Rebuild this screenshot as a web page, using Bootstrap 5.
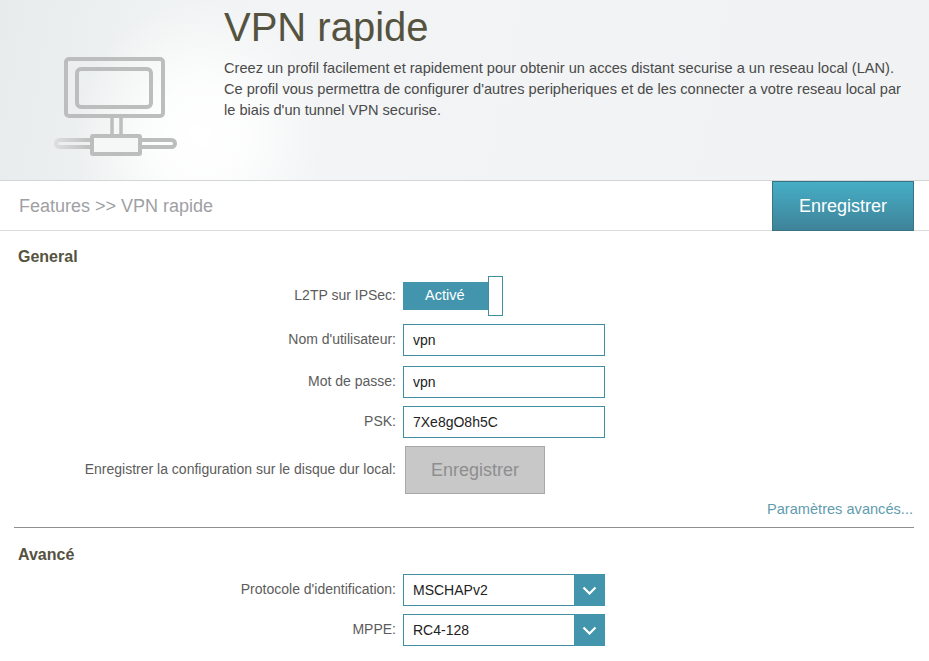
<!DOCTYPE html>
<html lang="fr">

<head>
    <meta charset="UTF-8">
    <title>VPN rapide</title>
    <link rel="stylesheet" href="https://cdn.jsdelivr.net/npm/bootstrap@5.3.0/dist/css/bootstrap.min.css">
    <style>
        html, body { height: 661px; overflow: hidden; }
        body { font-family: "Liberation Sans", Arial, sans-serif; color: #555; background: #fff; font-size: 14px; }
        .hero-band {
            height: 181px;
            border-bottom: 1px solid #d4d6d6;
            background:
                radial-gradient(ellipse 125px 135px at 200px 135px, #fff 0%, rgba(255,255,255,.85) 35%, rgba(255,255,255,0) 100%),
                linear-gradient(100deg, #e8ebec 0%, #f0f3f3 18%, #f2f4f5 30%, #f0f2f3 100%);
        }
        .hero-icon { width: 224px; flex: none; padding: 54px 0 0 50px; }
        .hero-art { filter: blur(.4px); }
        .hero-title { font-size: 40px; line-height: 44px; color: #55533f; padding-top: 5px; margin: 0 0 9px; font-weight: 400; }
        .hero-text { font-size: 14.6px; line-height: 21px; color: #4a4a4a; margin: 0; width: 688px; }
        .crumb-bar { height: 50px; border-bottom: 1px solid #dcdddd; padding-left: 19px; }
        .crumb-text { font-size: 18px; color: #a0a0a4; padding-top: 2px; }
        .save-top {
            width: 142px; height: 50px; margin-right: 15px;
            border: 1px solid #3a7385; border-radius: 0;
            background: linear-gradient(#45aec5, #3f8399);
            color: #fff; font-size: 18px; padding: 0;
        }
        .save-top:hover { color: #fff; }
        .sect-title { font-size: 16px; font-weight: 700; color: #55533f; line-height: 20px; margin: 0; padding-left: 18px; }
        .mt-general { margin-top: 16px; }
        .mt-advanced { margin-top: 17px; }
        .field-row { display: flex; align-items: center; }
        .gap-8 { margin-top: 8px; }
        .gap-9 { margin-top: 9px; }
        .gap-10 { margin-top: 10px; }
        .gap-link { margin-top: 5px; }
        .field-label { width: 396px; text-align: right; flex: none; color: #5c5c5c; font-size: 14px; margin: 0; padding-bottom: 1px; }
        .field-body { margin-left: 7px; }
        .dl-input {
            width: 202px; height: 32px; border: 1px solid #418ea0; border-radius: 0;
            padding: 0 9px; font-size: 14px; color: #222; background: #fff;
        }
        .dl-input:focus { outline: none; box-shadow: none; border-color: #418ea0; }
        .switch-wrap { width: 100px; height: 40px; position: relative; display: flex; align-items: center; }
        .switch-on {
            width: 86px; height: 28px; background: #4295ad; color: #fff;
            line-height: 27px; font-size: 14.5px; padding-left: 22px;
        }
        .switch-knob {
            position: absolute; left: 85px; top: 0; width: 15px; height: 40px;
            background: #fff; border: 1px solid #418ea0;
        }
        .save-off {
            width: 140px; height: 48px; margin-left: 2px; border: 1px solid #a8a8a8; border-radius: 0;
            background: #c8c8c8; color: #8e8e90; font-size: 18px; padding: 0;
        }
        .more-link { color: #5f9cae; text-decoration: none; font-size: 14.6px; line-height: 20px; padding-right: 16px; }
        .sect-rule { margin: 7px 15px 0 14px; border: 0; border-top: 1px solid #8f8f8f; opacity: 1; }
        .dl-select { position: relative; width: 202px; height: 32px; }
        .dl-select select {
            appearance: none; width: 100%; height: 100%; border: 1px solid #418ea0; border-radius: 0;
            background: #fff; font-size: 14px; color: #222; padding: 0 9px;
        }
        .dl-caret {
            position: absolute; right: 0; top: 0; width: 31px; height: 32px; background: #4295ad;
            display: flex; align-items: center; justify-content: center; pointer-events: none;
        }
    </style>
</head>

<body>
    <!-- Bandeau titre -->
    <header class="hero-band d-flex">
        <div class="hero-icon">
            <svg class="hero-art" width="130" height="104" viewBox="0 0 130 104" fill="none">
                <defs>
                    <linearGradient id="tube-fade" x1="0" x2="1" y1="0" y2="0">
                        <stop offset="0" stop-color="#dcdede"/>
                        <stop offset="1" stop-color="#bcbdbd"/>
                    </linearGradient>
                </defs>
                <g stroke="#bcbdbd" stroke-width="4">
                    <rect x="16" y="5" width="97" height="57" rx="3"/>
                    <rect x="27" y="15" width="74" height="38" rx="4"/>
                    <path d="M62 64v18M71 64v18" stroke-width="3.5"/>
                    <path d="M42 86H9.5a3.5 3.5 0 0 0 0 7H42" stroke="url(#tube-fade)"/>
                    <path d="M90 86h31.500a3.500 3.500 0 0 1 0 7H90"/>
                    <rect x="42" y="82" width="48" height="18" rx="1" fill="#f6f8f8"/>
                </g>
            </svg>
        </div>
        <div>
            <h1 class="hero-title">VPN rapide</h1>
            <p class="hero-text">Creez un profil facilement et rapidement pour obtenir un acces distant securise a un reseau local (LAN). Ce profil vous permettra de configurer d'autres peripheriques et de les connecter a votre reseau local par le biais d'un tunnel VPN securise.</p>
        </div>
    </header>

    <!-- Fil d'ariane -->
    <div class="crumb-bar d-flex justify-content-between align-items-center">
        <span class="crumb-text">Features &gt;&gt; VPN rapide</span>
        <button type="button" class="btn save-top align-self-start">Enregistrer</button>
    </div>

    <!-- General -->
    <section>
        <h2 class="sect-title mt-general">General</h2>
        <div class="field-row gap-9">
            <label class="field-label">L2TP sur IPSec:</label>
            <div class="field-body switch-wrap">
                <div class="switch-on">Activé</div>
                <div class="switch-knob"></div>
            </div>
        </div>
        <div class="field-row gap-8">
            <label class="field-label" for="f-user">Nom d'utilisateur:</label>
            <div class="field-body"><input id="f-user" type="text" class="dl-input d-block" value="vpn"></div>
        </div>
        <div class="field-row gap-10">
            <label class="field-label" for="f-pass">Mot de passe:</label>
            <div class="field-body"><input id="f-pass" type="text" class="dl-input d-block" value="vpn"></div>
        </div>
        <div class="field-row gap-8">
            <label class="field-label" for="f-psk">PSK:</label>
            <div class="field-body"><input id="f-psk" type="text" class="dl-input d-block" value="7Xe8gO8h5C"></div>
        </div>
        <div class="field-row gap-8">
            <label class="field-label">Enregistrer la configuration sur le disque dur local:</label>
            <div class="field-body"><button type="button" class="btn save-off d-block">Enregistrer</button></div>
        </div>
        <div class="text-end gap-link"><a href="#" class="more-link">Paramètres avancés...</a></div>
        <hr class="sect-rule">
    </section>

    <!-- Avance -->
    <section>
        <h2 class="sect-title mt-advanced">Avancé</h2>
        <div class="field-row gap-9">
            <label class="field-label" for="f-auth">Protocole d'identification:</label>
            <div class="field-body dl-select">
                <select id="f-auth"><option>MSCHAPv2</option></select>
                <span class="dl-caret"><svg width="15" height="9" viewBox="0 0 15 9" fill="none"><path d="M1.5 1.5l6 6 6-6" stroke="#fff" stroke-width="2.2"/></svg></span>
            </div>
        </div>
        <div class="field-row gap-8">
            <label class="field-label" for="f-mppe">MPPE:</label>
            <div class="field-body dl-select">
                <select id="f-mppe"><option>RC4-128</option></select>
                <span class="dl-caret"><svg width="15" height="9" viewBox="0 0 15 9" fill="none"><path d="M1.5 1.5l6 6 6-6" stroke="#fff" stroke-width="2.2"/></svg></span>
            </div>
        </div>
    </section>

    <script src="https://cdn.jsdelivr.net/npm/bootstrap@5.3.0/dist/js/bootstrap.bundle.min.js"></script>
</body>

</html>
